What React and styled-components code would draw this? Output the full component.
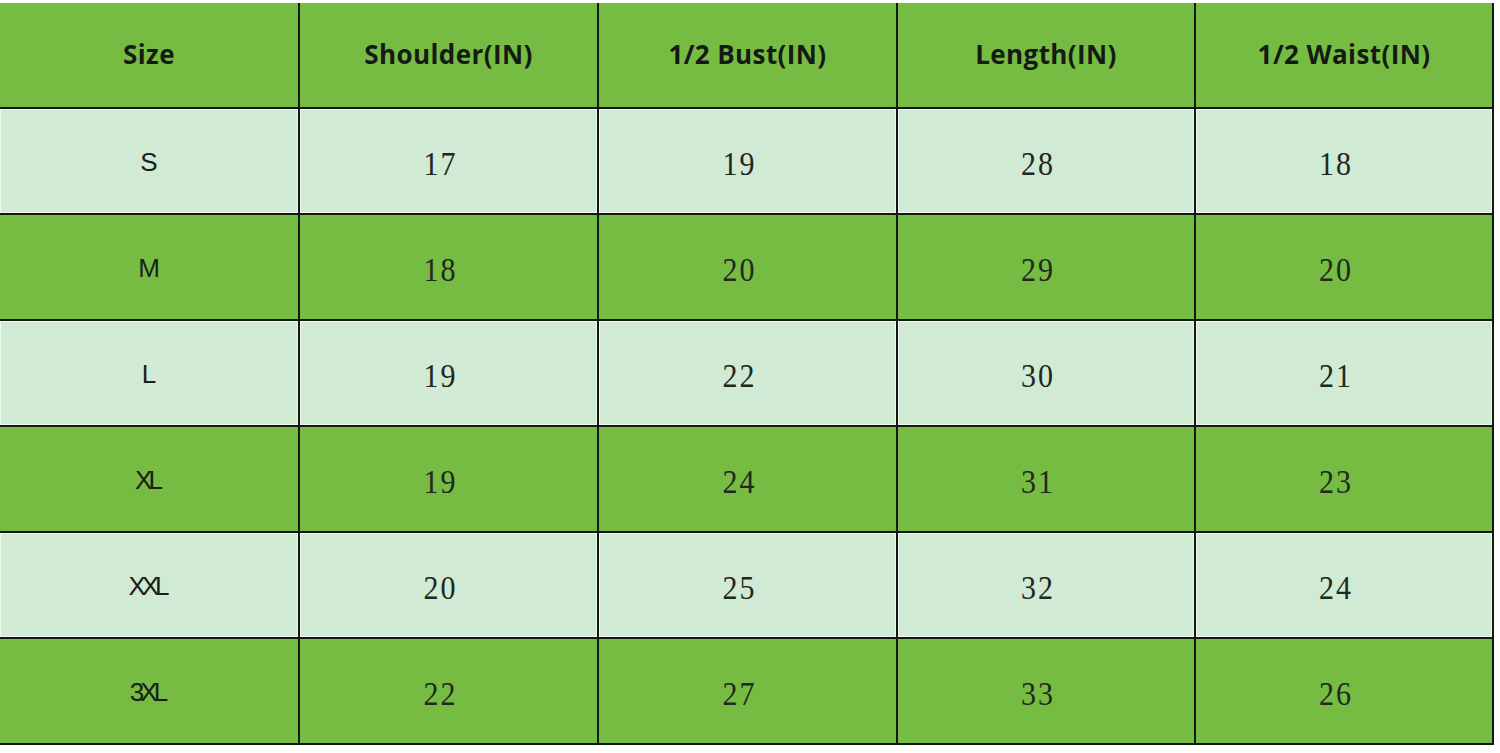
import React from "react";
import styled, { createGlobalStyle } from "styled-components";

const GlobalStyle = createGlobalStyle`
  html, body {
    margin: 0;
    padding: 0;
    background: #ffffff;
  }
  #root {
    padding-top: 3px;
  }
`;

const Table = styled.div`
  display: grid;
  grid-template-columns: 298px 297px 297px 296px 296px;
  grid-auto-rows: 104px;
  gap: 2px;
  width: max-content;
  background: #141814;
  padding: 0 2px 2px 0;
`;

const Cell = styled.div`
  display: flex;
  align-items: center;
  justify-content: center;
  background: ${(p) => (p.$light ? "#d0ead3" : "#77bc42")};
  box-shadow: ${(p) => (p.$light ? "inset 0 0 0 1px #eef8ef" : "none")};
  color: #151a14;
`;

const HeaderText = styled.span`
  font-family: "Open Sans", Lato, sans-serif;
  font-weight: 700;
  font-size: 26px;
  letter-spacing: 0.4px;
  padding-bottom: 2px;
`;

const SizeText = styled.span`
  font-family: "Liberation Sans", Arial, sans-serif;
  font-size: 26px;
  letter-spacing: -4px;
  padding-right: 4px;
  padding-top: 2px;
  color: #1a1f1a;
`;

const ValueText = styled.span`
  font-family: "Liberation Serif", "Times New Roman", serif;
  font-size: 30px;
  letter-spacing: 2px;
  display: inline-block;
  transform: scaleY(1.1);
  padding-top: 6px;
  margin-right: 16px;
  color: #222721;
`;

const headers = ["Size", "Shoulder(IN)", "1/2 Bust(IN)", "Length(IN)", "1/2 Waist(IN)"];

const rows = [
  ["S", 17, 19, 28, 18],
  ["M", 18, 20, 29, 20],
  ["L", 19, 22, 30, 21],
  ["XL", 19, 24, 31, 23],
  ["XXL", 20, 25, 32, 24],
  ["3XL", 22, 27, 33, 26],
];

export default function App() {
  return (
    <>
      <GlobalStyle />
      <Table>
        {headers.map((h) => (
          <Cell key={h}>
            <HeaderText>{h}</HeaderText>
          </Cell>
        ))}
        {rows.map((row, i) =>
          row.map((v, j) => (
            <Cell key={`${i}-${j}`} $light={i % 2 === 0}>
              {j === 0 ? <SizeText>{v}</SizeText> : <ValueText>{v}</ValueText>}
            </Cell>
          ))
        )}
      </Table>
    </>
  );
}
